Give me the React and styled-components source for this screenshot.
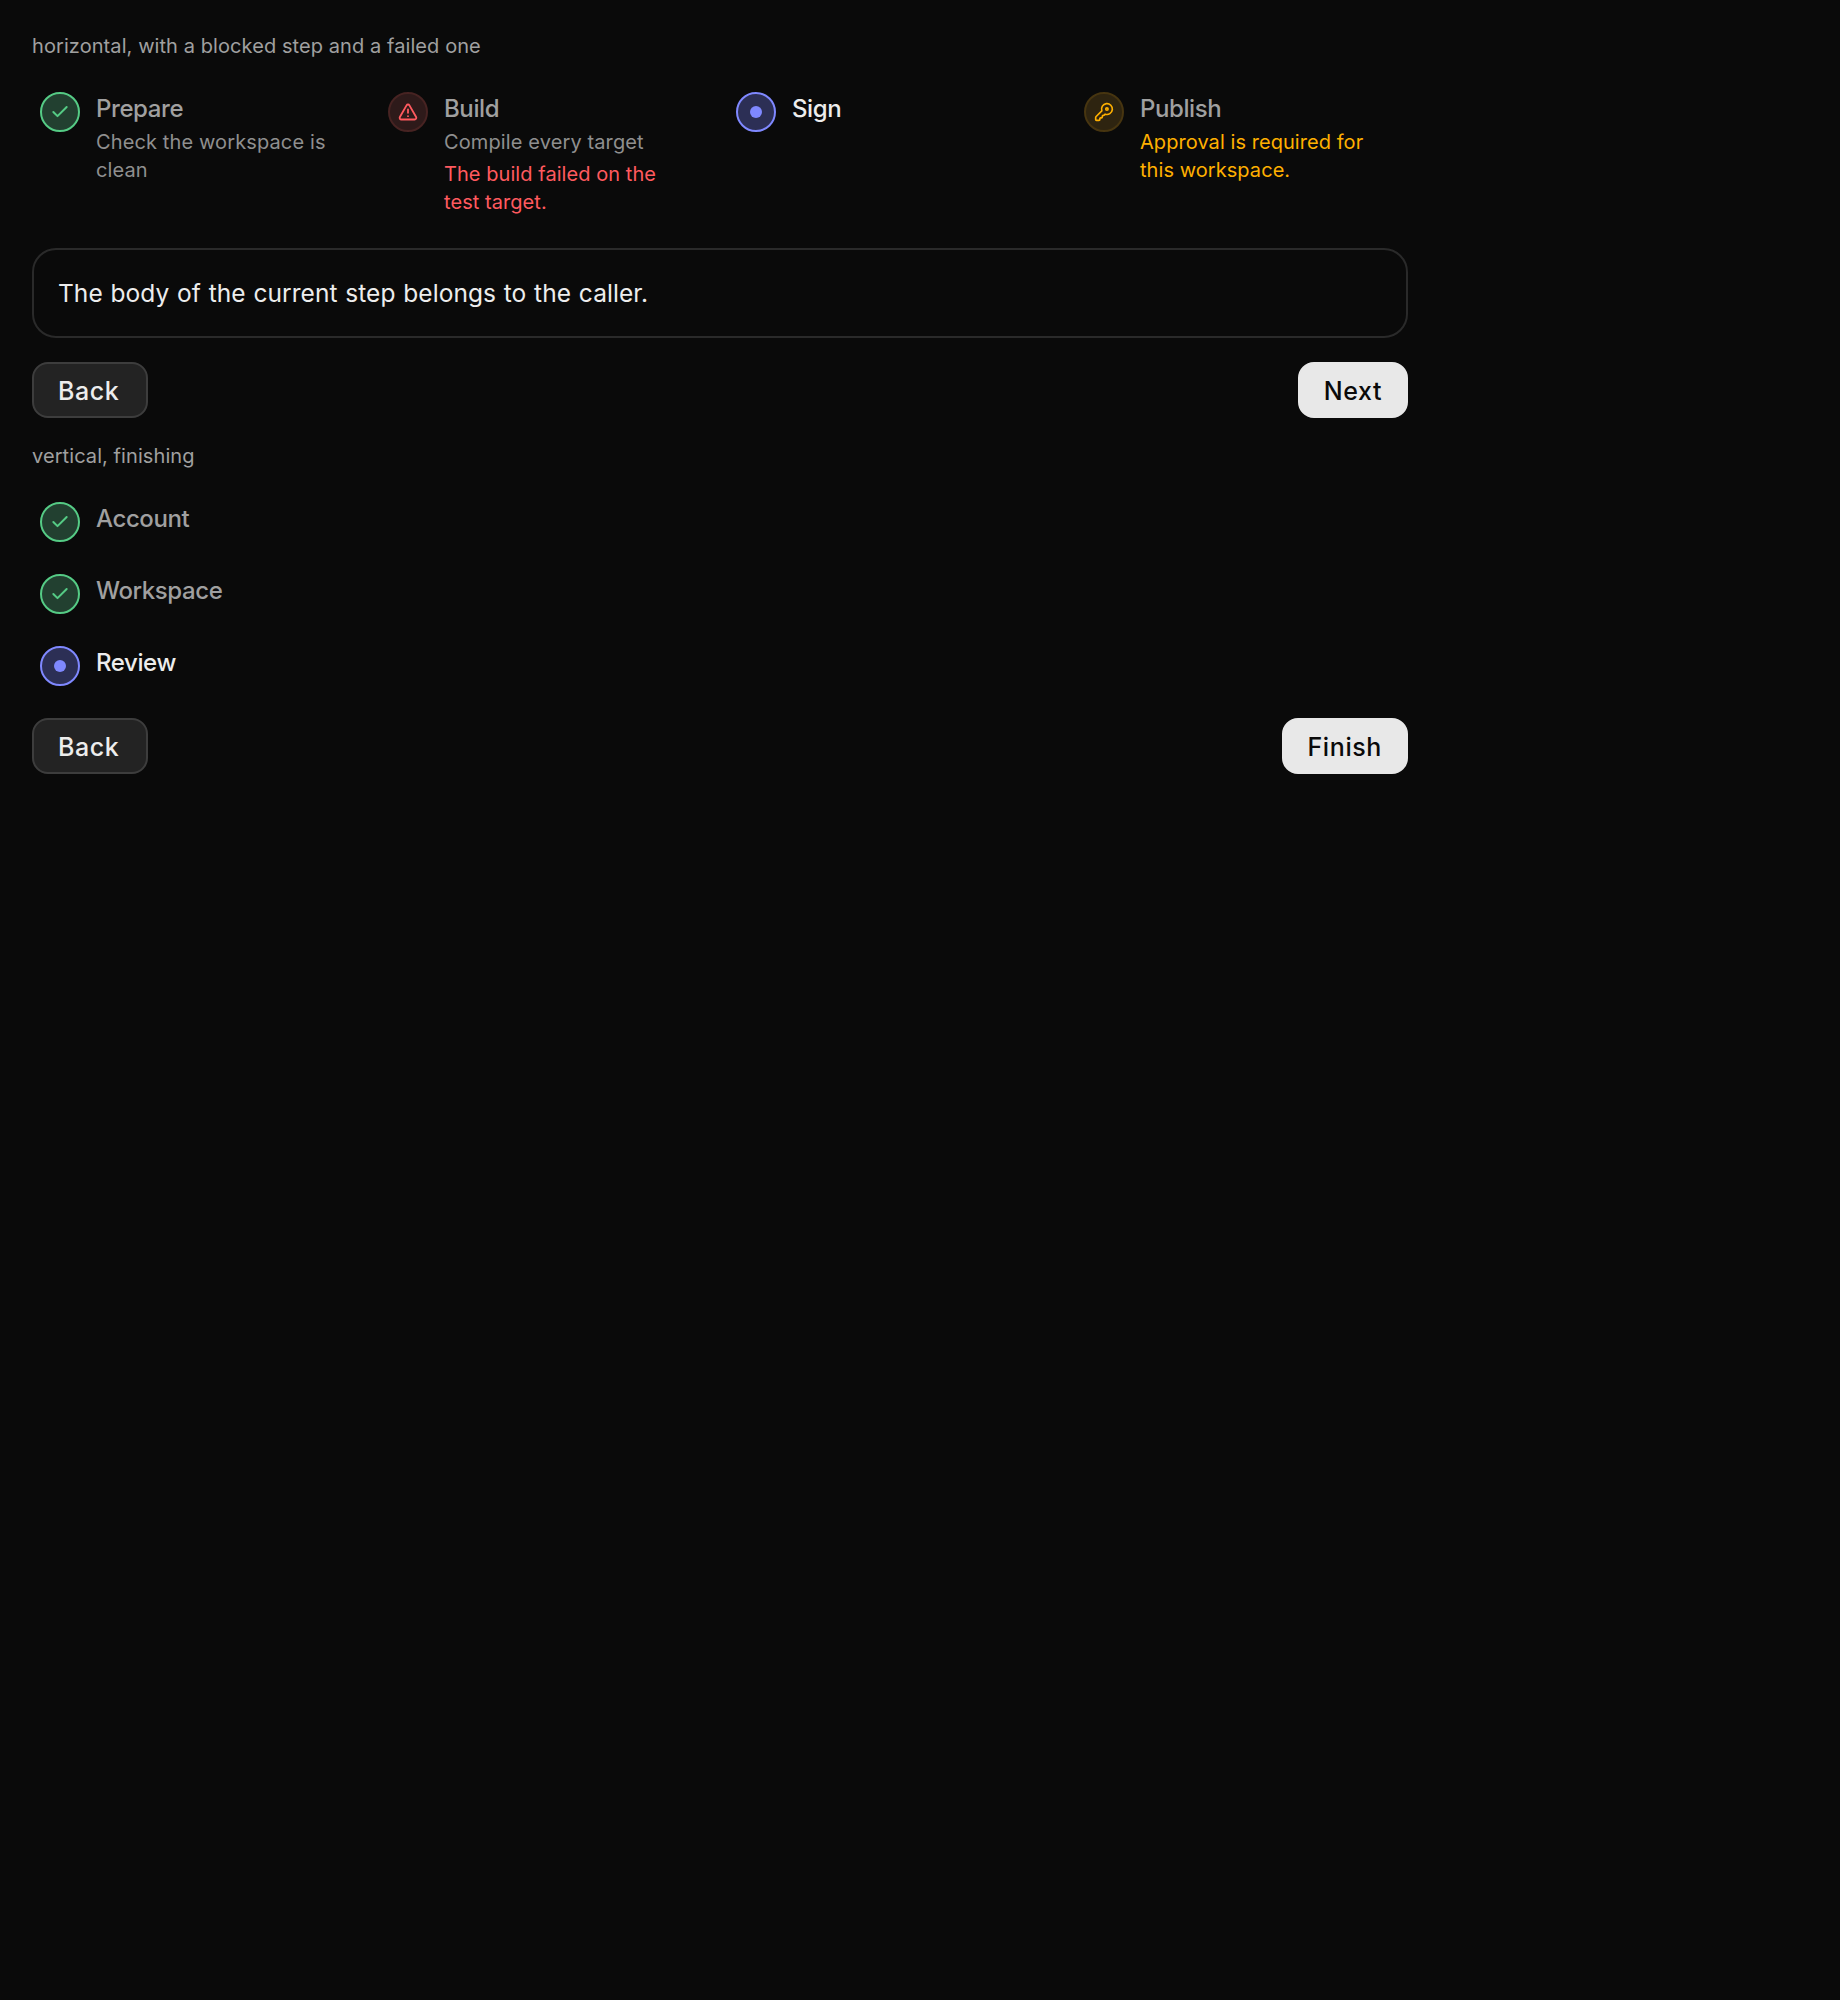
import React from 'react';
import styled, { createGlobalStyle } from 'styled-components';
import { Check, TriangleAlert } from 'lucide-react';

const GlobalStyle = createGlobalStyle`
    html, body {
        margin: 0;
        background: #0a0a0a;
        font-family: Inter, "Liberation Sans", sans-serif;
    }
`;

const tones = {
    done: { border: '#55cb85', fill: '#224030', color: '#55cb85' },
    failed: { border: '#472322', fill: '#2e1a1a', color: '#ff5a5f' },
    current: { border: '#7f88ff', fill: '#2c2f55', color: '#7f88ff' },
    blocked: { border: '#473510', fill: '#2e2410', color: '#ffb000' },
};

const Page = styled.div`
    width: 1376px;
    min-height: 1936px;
    padding: 32px;
    display: flex;
    flex-direction: column;
`;

const Caption = styled.div`
    font-size: 20px;
    line-height: 28px;
    letter-spacing: 0.08px;
    color: #a0a0a0;
    margin-bottom: 32px;
`;

const HorizontalSteps = styled.ol`
    list-style: none;
    margin: 0 0 32px;
    padding: 0;
    display: grid;
    grid-template-columns: repeat(4, 348px);
`;

const VerticalSteps = styled.ol`
    list-style: none;
    margin: 0 0 32px;
    padding: 0;
    display: flex;
    flex-direction: column;
    gap: 32px;
`;

const Step = styled.li`
    display: flex;
    gap: 16px;
    padding: 0 40px 0 8px;
`;

const Circle = styled.span`
    flex: none;
    box-sizing: border-box;
    width: 40px;
    height: 40px;
    border-radius: 50%;
    border: 2px solid ${props => tones[props.$tone].border};
    background: ${props => tones[props.$tone].fill};
    color: ${props => tones[props.$tone].color};
    display: flex;
    align-items: center;
    justify-content: center;
`;

const Dot = styled.span`
    width: 12px;
    height: 12px;
    border-radius: 50%;
    background: #7f88ff;
`;

const StepText = styled.div`
    display: flex;
    flex-direction: column;
    gap: 2px;
    min-width: 0;
`;

const StepTitle = styled.div`
    font-size: 24px;
    line-height: 34px;
    font-weight: 500;
    letter-spacing: -0.4px;
    color: ${props => (props.$current ? '#ededed' : '#a0a0a0')};
`;

const StepHint = styled.div`
    font-size: 20px;
    line-height: 28px;
    letter-spacing: 0.12px;
    color: #8f8f8f;
`;

const StepNote = styled.div`
    font-size: 20px;
    line-height: 28px;
    letter-spacing: 0.06px;
    color: ${props => tones[props.$tone].color};

    ${StepHint} + & {
        margin-top: 2px;
    }
`;

const Panel = styled.div`
    border: 2px solid #2a2a2a;
    border-radius: 24px;
    padding: 24px;
    font-size: 24.5px;
    line-height: 38px;
    letter-spacing: 0.06px;
    word-spacing: 0.8px;
    color: #ededed;
    margin-bottom: 24px;
`;

const Actions = styled.div`
    display: flex;
    justify-content: space-between;
    margin-bottom: ${props => props.$below || 0}px;
`;

const Button = styled.button`
    box-sizing: border-box;
    height: 56px;
    padding: 1px ${props => (props.$primary ? 24 : 27)}px 0 24px;
    border-radius: 16px;
    border: 2px solid ${props => (props.$primary ? '#e8e8e8' : '#3d3d3d')};
    background: ${props => (props.$primary ? '#e8e8e8' : '#232323')};
    color: ${props => (props.$primary ? '#0a0a0a' : '#ededed')};
    font-family: inherit;
    font-size: 25px;
    font-weight: 500;
    letter-spacing: 0.6px;
`;

// lucide's key-round, with the ring in the head opened up as in the design
const KeyIcon = () => (
    <svg width="20" height="20" viewBox="0 0 24 24" fill="none" stroke="currentColor" strokeWidth="2" strokeLinecap="round" strokeLinejoin="round">
        <path d="M2.586 17.414A2 2 0 0 0 2 18.828V21a1 1 0 0 0 1 1h3a1 1 0 0 0 1-1v-1a1 1 0 0 1 1-1h1a1 1 0 0 0 1-1v-1a1 1 0 0 1 1-1h.172a2 2 0 0 0 1.414-.586l.814-.814a6.5 6.5 0 1 0-4-4z" />
        <circle cx="15.5" cy="8.5" r="1.4" />
    </svg>
);

function StepIcon({ tone }) {
    if (tone === 'done') return <Check size={20} strokeWidth={2.4} />;
    if (tone === 'failed') return <TriangleAlert size={20} strokeWidth={2.2} />;
    if (tone === 'blocked') return <KeyIcon />;
    return <Dot />;
}

const App = () => (
    <Page>
        <GlobalStyle />
        <Caption>horizontal, with a blocked step and a failed one</Caption>
        <HorizontalSteps>
            <Step>
                <Circle $tone="done"><StepIcon tone="done" /></Circle>
                <StepText>
                    <StepTitle>Prepare</StepTitle>
                    <StepHint>Check the workspace is clean</StepHint>
                </StepText>
            </Step>
            <Step>
                <Circle $tone="failed"><StepIcon tone="failed" /></Circle>
                <StepText>
                    <StepTitle>Build</StepTitle>
                    <StepHint>Compile every target</StepHint>
                    <StepNote $tone="failed">The build failed on the test target.</StepNote>
                </StepText>
            </Step>
            <Step>
                <Circle $tone="current"><StepIcon tone="current" /></Circle>
                <StepText>
                    <StepTitle $current>Sign</StepTitle>
                </StepText>
            </Step>
            <Step>
                <Circle $tone="blocked"><StepIcon tone="blocked" /></Circle>
                <StepText>
                    <StepTitle>Publish</StepTitle>
                    <StepNote $tone="blocked">Approval is required for this workspace.</StepNote>
                </StepText>
            </Step>
        </HorizontalSteps>
        <Panel>The body of the current step belongs to the caller.</Panel>
        <Actions $below={24}>
            <Button>Back</Button>
            <Button $primary>Next</Button>
        </Actions>
        <Caption>vertical, finishing</Caption>
        <VerticalSteps>
            <Step>
                <Circle $tone="done"><StepIcon tone="done" /></Circle>
                <StepText><StepTitle>Account</StepTitle></StepText>
            </Step>
            <Step>
                <Circle $tone="done"><StepIcon tone="done" /></Circle>
                <StepText><StepTitle>Workspace</StepTitle></StepText>
            </Step>
            <Step>
                <Circle $tone="current"><StepIcon tone="current" /></Circle>
                <StepText><StepTitle $current>Review</StepTitle></StepText>
            </Step>
        </VerticalSteps>
        <Actions>
            <Button>Back</Button>
            <Button $primary>Finish</Button>
        </Actions>
    </Page>
);

export default App;
